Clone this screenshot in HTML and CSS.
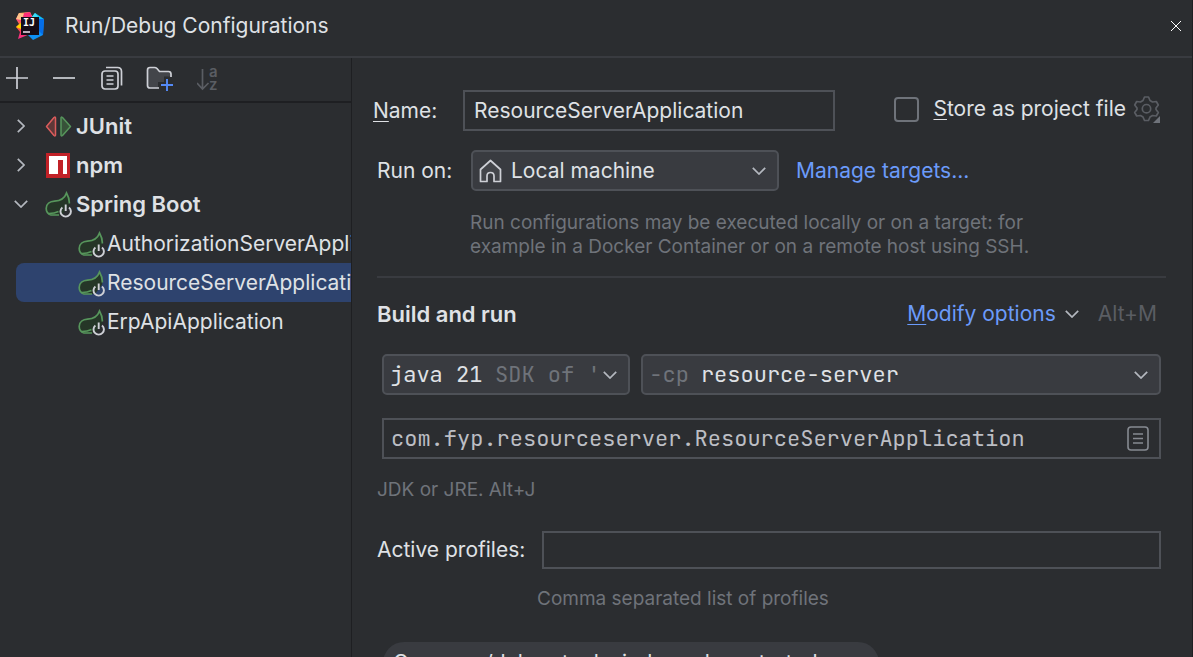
FILE: index.html
```html
<!DOCTYPE html>
<html lang="en">
<head>
<meta charset="utf-8">
<meta name="viewport" content="width=device-width, initial-scale=1">
<title>Run/Debug Configurations</title>
<link rel="stylesheet" href="styles.css">
</head>
<body>
<svg class="defs" aria-hidden="true">
  <symbol id="chevron-down" viewBox="0 0 14 8"><path d="M.8.8 7 7 13.200.8" fill="none" stroke="currentColor" stroke-width="1.7"/></symbol>
  <symbol id="chevron-right" viewBox="0 0 8 14"><path d="M.8.8 7 7 .8 13.2" fill="none" stroke="currentColor" stroke-width="1.7"/></symbol>
  <symbol id="spring" viewBox="0 0 27 27">
    <path d="M21.500 2C23.600 6.500 24.500 10 24.200 14.500L17 24H6.500C3 23.500 1.200 20.500 1.200 17.500 1.200 13 5 10.500 9.500 10.200 15.500 9.800 19.500 8 21.500 2Z" fill="#253627"/>
    <path d="M24.300 12.500C24.500 9 23.500 5.500 21.500 2 19.500 8 15.500 9.800 9.500 10.200 5 10.500 1.200 13 1.200 17.500 1.200 20.500 3 23 6 24H14M4 22.500C8 22.500 10.500 22 13.500 20.500" fill="none" stroke="#57965c" stroke-width="1.7"/>
    <path d="M17.400 16.400A5.200 5.200 0 1 0 24 16.400M20.700 13.500V20" fill="none" stroke="#ced0d6" stroke-width="1.900"/>
  </symbol>
</svg>

<main class="dialog">
  <header class="titlebar">
    <svg class="logo" viewBox="0 0 28 28" aria-hidden="true">
      <defs>
        <linearGradient id="warm" x1="0" y1="0" x2="0" y2="1"><stop offset="0" stop-color="#fdb75b"/><stop offset=".3" stop-color="#ff4a7d"/><stop offset=".5" stop-color="#ff8a1e"/><stop offset=".7" stop-color="#f9375b"/><stop offset="1" stop-color="#f52d8a"/></linearGradient>
        <linearGradient id="cool" x1="0" y1="0" x2="0" y2="1"><stop offset="0" stop-color="#12d5f5"/><stop offset=".5" stop-color="#078efc"/><stop offset="1" stop-color="#1191f5"/></linearGradient>
      </defs>
      <path d="M3 1 14 0 17 6 14 22 2 27 4 20 0 15 3 12 0 7Z" fill="url(#warm)"/>
      <path d="M3 1 8 2 5 8 0 7Z" fill="#ffc38a"/>
      <path d="M0 15 5 11 5 17Z" fill="#ffd400"/>
      <path d="M8 1 14 0 16 5 7 6Z" fill="#fd2d78"/>
      <path d="M15 6 19 1 28 7 27 23 17 28 11 22Z" fill="url(#cool)"/>
      <path d="M19 1 23 6 15 6Z" fill="#3edcf7"/>
      <path d="M23 7 28 7 27 23 22 18Z" fill="#056de8"/>
      <path d="M5 5H23V23H5Z" fill="#150d18"/>
      <text x="7" y="14" class="logo-text">IJ</text>
      <path d="M7 19H14V21H7Z" fill="#b9adb9"/>
    </svg>
    <h1>Run/Debug Configurations</h1>
    <button class="icon-button close" aria-label="Close">
      <svg width="12" height="12" viewBox="0 0 12 12"><path d="M1 1 11 11M11 1 1 11" stroke="#fff" stroke-width="1"/></svg>
    </button>
  </header>

  <div class="content">
    <aside class="sidebar">
      <div class="toolbar">
        <button class="icon-button" aria-label="Add"><svg width="24" height="24" viewBox="0 0 24 24"><path d="M12 1V23M1 12H23" stroke="#ced0d6" stroke-width="1.700"/></svg></button>
        <button class="icon-button" aria-label="Remove"><svg width="24" height="24" viewBox="0 0 24 24"><path d="M1 12H23" stroke="#ced0d6" stroke-width="1.700"/></svg></button>
        <button class="icon-button" aria-label="Copy"><svg width="24" height="24" viewBox="0 0 24 24" fill="none" stroke="#ced0d6" stroke-width="1.700"><rect x="3" y="5" width="16" height="18" rx="3"/><path d="M7 1.500H18.500Q22.500 1.500 22.500 5.500V19.500M7.500 10H14.500M7.500 14H14.500M7.500 18H14.500"/></svg></button>
        <button class="icon-button" aria-label="New folder"><svg width="28" height="28" viewBox="0 0 28 28" fill="none" stroke-width="1.700"><path d="M12 24H4Q1.500 24 1.500 21.500V6Q1.500 3.500 4 3.500H8.500Q10 3.500 11 4.500L13.500 7.500H22.500Q25 7.500 25 10V12.500H18V18H12Z" fill="#43454a"/><path d="M13 24H4Q1.500 24 1.500 21.500V6Q1.500 3.500 4 3.500H8.500Q10 3.500 11 4.500L13.500 7.500H22.500Q25 7.500 25 10V13" stroke="#ced0d6"/><path d="M21 15V27M15 21H27" stroke="#548af7" stroke-width="1.900"/></svg></button>
        <button class="icon-button sort" aria-label="Sort configurations" disabled><svg width="24" height="28" viewBox="0 0 24 28"><path d="M5.500 5V25M0 19 5.500 25 11.500 19" fill="none" stroke="#5a5d63" stroke-width="1.700"/><text x="12" y="13">a</text><text x="12" y="26">z</text></svg></button>
      </div>
      <ul class="tree" role="tree">
        <li class="row group" role="treeitem" aria-expanded="false">
          <span class="arrow"><svg width="8" height="14"><use href="#chevron-right"/></svg></span>
          <svg class="type" viewBox="0 0 27 27" stroke-width="1.500" stroke-linejoin="round"><path d="M1.500 13.500 9 4.500Q10.500 3.500 10.500 5V22Q10.500 23.500 9 22.500Z" fill="#5e3838" stroke="#db5c5c"/><path d="M25.500 13.500 17.500 4.500Q16 3.500 16 5V22Q16 23.500 17.500 22.500Z" fill="#375239" stroke="#57965c"/></svg>
          <span>JUnit</span>
        </li>
        <li class="row group" role="treeitem" aria-expanded="false">
          <span class="arrow"><svg width="8" height="14"><use href="#chevron-right"/></svg></span>
          <svg class="type" viewBox="0 0 27 27"><path d="M1 1H25V26H1Z" fill="#c12127"/><path d="M4 4H22V22H18V8H13V22H4Z" fill="#fff"/></svg>
          <span>npm</span>
        </li>
        <li class="row group" role="treeitem" aria-expanded="true">
          <span class="arrow"><svg width="14" height="8"><use href="#chevron-down"/></svg></span>
          <svg class="type"><use href="#spring"/></svg>
          <span>Spring Boot</span>
        </li>
        <li class="row leaf" role="treeitem"><svg class="type"><use href="#spring"/></svg><span>AuthorizationServerApplication</span></li>
        <li class="row leaf selected" role="treeitem" aria-selected="true"><svg class="type"><use href="#spring"/></svg><span>ResourceServerApplication</span></li>
        <li class="row leaf" role="treeitem"><svg class="type"><use href="#spring"/></svg><span>ErpApiApplication</span></li>
      </ul>
    </aside>

    <form class="form">
      <div class="name-row">
        <label for="name"><u>N</u>ame:</label>
        <input class="field" id="name" type="text" value="ResourceServerApplication">
        <div class="store">
          <input class="check" id="store" type="checkbox">
          <label for="store"><u>S</u>tore as project file</label>
          <button class="icon-button gear" type="button" aria-label="Storage options"><svg width="28" height="28" viewBox="0 0 28 28"><g fill="none" stroke="#5a5d63" stroke-width="1.700" stroke-linejoin="round"><path d="M11.500 2H15.500L17 5.500 19.500 7 23.300 6.500 25.300 10 23 13V14.500L25.300 17.500 23.300 21 19.500 20.500 17 22 15.500 25.500H11.500L10 22 7.500 20.500 3.700 21 1.700 17.500 4 14.500V13L1.700 10 3.700 6.500 7.500 7 10 5.500Z"/><circle cx="13.500" cy="13.700" r="4.200"/></g><path d="M27 21V28H20Z" fill="#6f737a"/></svg></button>
        </div>
      </div>

      <div class="target-row">
        <label for="target">Run on:</label>
        <div class="combo">
          <svg width="24" height="24" viewBox="0 0 24 24" fill="#43454a" stroke="#ced0d6" stroke-width="1.700" stroke-linejoin="round"><path d="M1.500 10.500 11.500 1.500 21.500 10.500V22.500H15V17Q15 13.500 11.500 13.500T8 17V22.500H1.500Z"/></svg>
          <select class="grow" id="target"><option>Local machine</option></select>
          <svg class="chev" width="14" height="8"><use href="#chevron-down"/></svg>
        </div>
        <a href="#targets">Manage targets...</a>
      </div>
      <p class="hint target-hint">Run configurations may be executed locally or on a target: for example in a Docker Container or on a remote host using SSH.</p>

      <section class="build">
        <div class="section-head">
          <h2>Build and run</h2>
          <a href="#options"><u>M</u>odify options</a>
          <svg class="chev" width="14" height="8"><use href="#chevron-down"/></svg>
          <kbd>Alt+M</kbd>
        </div>
        <div class="controls">
          <div class="pair">
            <div class="combo mono">
              <select aria-label="JRE"><option>java 21</option></select>
              <span class="dim clip">SDK of '</span>
              <svg class="chev" width="14" height="8"><use href="#chevron-down"/></svg>
            </div>
            <div class="combo mono">
              <label class="dim" for="classpath">-cp</label>
              <select class="grow" id="classpath"><option>resource-server</option></select>
              <svg class="chev" width="14" height="8"><use href="#chevron-down"/></svg>
            </div>
          </div>
          <div class="field main-class mono">
            <input type="text" aria-label="Main class" value="com.fyp.resourceserver.ResourceServerApplication">
            <button class="icon-button" type="button" aria-label="Browse classes"><svg width="22" height="26" viewBox="0 0 22 26" fill="none" stroke="#868a91" stroke-width="1.600"><rect x="1" y="1" width="20" height="23" rx="3"/><path d="M6 8H16M6 12.500H16M6 17H16"/></svg></button>
          </div>
        </div>
        <p class="hint">JDK or JRE. Alt+J</p>
        <div class="profiles">
          <label for="profiles">Active profiles:</label>
          <input class="field" id="profiles" type="text">
        </div>
        <p class="hint profiles-hint">Comma separated list of profiles</p>
        <button class="chip" type="button">Open run/debug tool window when started</button>
      </section>
    </form>
  </div>
</main>
</body>
</html>
```
FILE: styles.css
```css
* { box-sizing: border-box; }

body {
  margin: 0;
  background: #2b2d30;
  color: #dfe1e5;
  font: 21px/26px Inter, "Liberation Sans", sans-serif;
}

h1, h2, p, ul { margin: 0; padding: 0; }
h1 { font-size: 21px; font-weight: 400; }
h2 { font-size: 22px; font-weight: 600; }
a { color: #6b9bfa; text-decoration: none; }
u { text-underline-offset: 3px; text-decoration-thickness: 1px; }
svg { flex: none; display: block; }
input, select, button { font: inherit; color: inherit; margin: 0; }

.defs { position: absolute; width: 0; height: 0; }

.dialog {
  display: flex;
  flex-direction: column;
  height: 100vh;
  overflow: hidden;
  border-right: 1px solid #1e1f22;
}

.titlebar {
  display: flex;
  align-items: center;
  gap: 21px;
  padding: 12px 10px 16px 16px;
  border-bottom: 2px solid #393b40;
}
.titlebar h1 { flex: 1; }
.logo { width: 28px; height: 28px; }
.logo-text { font: bold 10px "DejaVu Sans Mono", monospace; fill: #fff; }

.icon-button {
  display: flex;
  padding: 0;
  border: 0;
  background: none;
}

.content { display: flex; flex: 1; min-height: 0; }

.sidebar {
  flex: 0 0 352px;
  border-right: 1px solid #1e1f22;
  overflow: hidden;
}
.toolbar {
  display: flex;
  align-items: center;
  gap: 23px;
  height: 45px;
  padding: 0 5px 3px;
  border-bottom: 2px solid #1e1f22;
}
.sort text { font: 600 15px Inter, sans-serif; fill: #5a5d63; }

.tree { list-style: none; padding-top: 4px; }
.row {
  display: flex;
  align-items: center;
  gap: 4px;
  height: 39px;
  margin-left: 16px;
  white-space: nowrap;
}
.group { padding-bottom: 1px; font-size: 22px; font-weight: 600; }
.leaf { padding: 1px 0 0 62px; gap: 2px; }
.selected { background: #2e436e; border-radius: 8px 0 0 8px; }
.arrow { display: flex; justify-content: center; width: 10px; margin-right: 15px; color: #b4b8bf; }
.arrow svg { margin: 0 -2px; }
.type { width: 27px; height: 27px; }

.form { flex: 1; min-width: 0; padding: 32px 26px 0 25px; }

.field {
  min-width: 0;
  height: 41px;
  padding: 0 9px;
  border: 2px solid #4e5157;
  border-radius: 0;
  background: #2b2d30;
}

.name-row { display: flex; align-items: center; margin-left: -4px; }
.name-row > label { flex: none; width: 90px; }
.name-row .field { flex: 0 1 372px; }
.store { display: flex; align-items: center; gap: 14px; margin-left: auto; padding: 0 5px 3px 0; white-space: nowrap; }
.check {
  appearance: none;
  width: 25px;
  height: 25px;
  border: 2px solid #6f737a;
  border-radius: 4px;
}
.gear { margin-left: -7px; }

.combo {
  display: flex;
  align-items: center;
  gap: 8px;
  min-width: 0;
  height: 41px;
  padding: 0 11px 0 6px;
  border: 2px solid #4e5157;
  border-radius: 5px;
  background: #393b40;
}
.combo select {
  appearance: none;
  min-width: 0;
  padding: 0;
  border: 0;
  background: none;
}
.combo .grow { flex: 1; }
.chev { color: #b4b8bf; }

.target-row { display: flex; align-items: center; margin-top: 19px; }
.target-row label { flex: none; width: 94px; }
.target-row .combo { flex: 0 1 308px; margin-right: 17px; }

.hint { font-size: 19px; line-height: 24px; color: #6f737a; }
.target-hint { max-width: 680px; margin: 20px 0 17px; padding-left: 93px; }

.build { border-top: 2px solid #393b40; padding-top: 23px; }
.section-head { display: flex; align-items: center; padding-right: 9px; }
.section-head h2 { flex: 1; }
.section-head .chev { margin: 0 19px 0 9px; }
kbd { font: inherit; color: #5a5d63; }

.controls { display: grid; gap: 23px; margin-top: 27px; padding: 0 5px; }
.pair { display: grid; grid-template-columns: 248fr 519fr; gap: 11px; }
.mono { font-family: "JetBrains Mono", "DejaVu Sans Mono", monospace; font-size: 22px; }
.pair .combo { gap: 4px; }
.dim { color: #6f737a; }
.clip { flex: 1; margin-left: 8px; overflow: hidden; white-space: nowrap; }
label.dim { margin-right: 8px; }
.main-class { display: flex; align-items: center; padding: 0 10px 0 7px; }
.main-class input { flex: 1; min-width: 0; padding: 0; border: 0; background: none; color: #bcbec4; }

.build > .hint { margin-top: 19px; }
.profiles { display: flex; align-items: center; margin-top: 29px; padding-right: 5px; }
.profiles label { flex: none; width: 165px; }
.profiles .field { flex: 1; height: 38px; }
.build > .profiles-hint { margin-top: 18px; padding-left: 160px; }
.chip {
  margin: 31px 0 0 6px;
  padding: 8px 61px 8px 10px;
  border: 0;
  border-radius: 22px;
  background: #393b40;
  white-space: nowrap;
}
```
